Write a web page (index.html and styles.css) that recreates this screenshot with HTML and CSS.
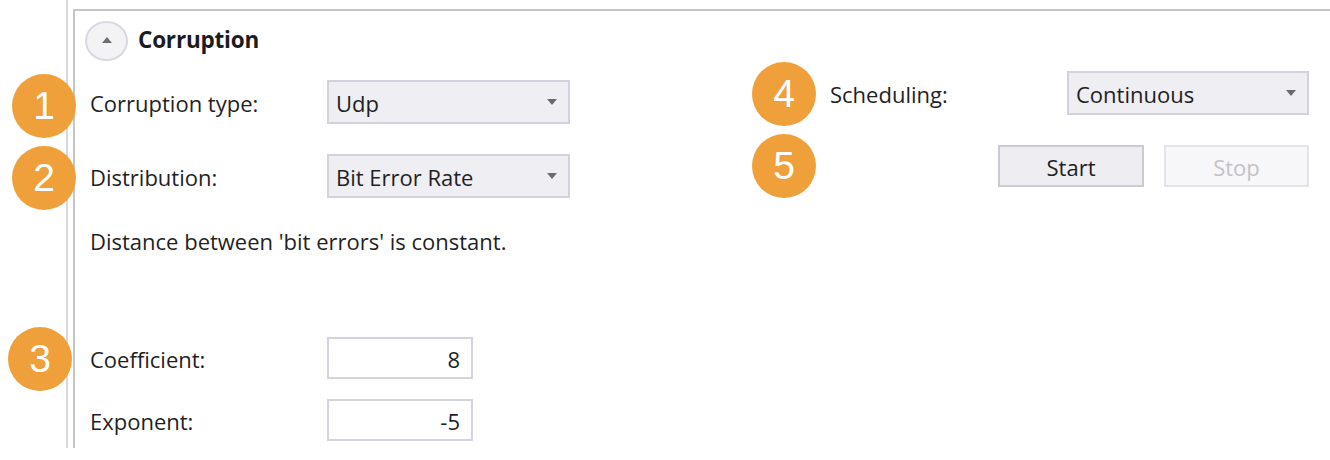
FILE: index.html
```html
<!DOCTYPE html>
<html lang="en">
<head>
<meta charset="utf-8">
<title>Corruption</title>
<link rel="stylesheet" href="styles.css">
</head>
<body>
<div class="page">
  <div class="frame">
    <section class="panel">
      <header class="panel-head">
        <button class="collapse" type="button" aria-label="Collapse">
          <svg width="10" height="6" viewBox="0 0 10 6"><path d="M0 6 L5 0 L10 6 Z" fill="#6e6e6e"/></svg>
        </button>
        <h2 class="panel-title">Corruption</h2>
      </header>
      <div class="panel-body">
        <div class="col col-left">
          <div class="field">
            <span class="label">Corruption type:</span>
            <div class="select"><span>Udp</span><span class="caret"></span></div>
          </div>
          <div class="field field-gap">
            <span class="label">Distribution:</span>
            <div class="select"><span>Bit Error Rate</span><span class="caret"></span></div>
          </div>
          <p class="desc">Distance between 'bit errors' is constant.</p>
          <div class="field field-num field-coef">
            <span class="label">Coefficient:</span>
            <div class="input">8</div>
          </div>
          <div class="field field-num field-exp">
            <span class="label">Exponent:</span>
            <div class="input">-5</div>
          </div>
        </div>
        <div class="col col-right">
          <div class="field field-sched">
            <span class="label">Scheduling:</span>
            <div class="select select-sched"><span>Continuous</span><span class="caret"></span></div>
          </div>
          <div class="buttons">
            <button class="btn" type="button">Start</button>
            <button class="btn btn-disabled" type="button" disabled>Stop</button>
          </div>
        </div>
      </div>
    </section>
  </div>
  <span class="badge badge-1">1</span>
  <span class="badge badge-2">2</span>
  <span class="badge badge-3">3</span>
  <span class="badge badge-4">4</span>
  <span class="badge badge-5">5</span>
</div>
</body>
</html>
```

FILE: styles.css
```css
* { box-sizing: border-box; }
html, body { margin: 0; padding: 0; background: #ffffff; }
body {
  font-family: "Open Sans", "Noto Sans", "DejaVu Sans", sans-serif;
  color: #1f1f24;
  width: 1330px;
  height: 460px;
  overflow: hidden;
}
.page { position: relative; width: 1330px; height: 460px; }
.frame {
  margin-left: 66px;
  border-left: 2px solid #d6d6e4;
  padding-left: 5px;
  height: 448px;
  padding-top: 9px;
}
.panel {
  border-left: 2px solid #c6c6c9;
  border-top: 2px solid #c6c6c9;
  height: 439px;
}
.panel-head {
  display: flex;
  align-items: center;
  padding: 10px 0 0 10px;
  height: 50px;
}
.collapse {
  width: 43px;
  height: 40px;
  border-radius: 50%;
  border: 2px solid #d8d8e0;
  background: #f3f3f6;
  display: flex;
  align-items: center;
  justify-content: center;
  padding: 0 0 3px 0;
  margin: 0;
}
.panel-title {
  margin: 0 0 3px 10px;
  font-size: 22.5px;
  line-height: 28px;
  font-weight: 700;
  color: #1b1b22;
  letter-spacing: -0.2px;
}
.panel-body { display: flex; }
.col-left { width: 495px; padding-left: 15px; padding-top: 19px; }
.col-right { width: 479px; margin-left: 260px; padding-top: 10px; }
.field { display: flex; align-items: center; height: 44px; }
.field-gap { margin-top: 30px; }
.label { flex: 1; font-size: 22px; line-height: 28px; padding-top: 2px; }
.select {
  width: 243px;
  height: 44px;
  display: flex;
  align-items: center;
  justify-content: space-between;
  background: #eeeef3;
  border: 2px solid #d2d2de;
  padding: 2px 11px 0 7px;
  font-size: 22px;
}
.select-sched { width: 242px; }
.caret {
  width: 0;
  height: 0;
  border-left: 5px solid transparent;
  border-right: 5px solid transparent;
  border-top: 6px solid #6a6a6e;
  margin-top: -3px;
}
.desc {
  margin: 28px 0 0 0;
  font-size: 22px;
  line-height: 30px;
}
.field-num { height: 42px; }
.field-coef { margin-top: 81px; }
.field-exp { margin-top: 20px; }
.input {
  width: 146px;
  height: 42px;
  margin-right: 97px;
  background: #ffffff;
  border: 2px solid #d4d4e0;
  display: flex;
  align-items: center;
  justify-content: flex-end;
  padding: 2px 11px 0 0;
  font-size: 22px;
}
.buttons {
  display: flex;
  justify-content: flex-end;
  gap: 20px;
  margin-top: 30px;
}
.btn {
  width: 146px;
  height: 42px;
  margin: 0;
  padding: 2px 0 0 0;
  font-family: inherit;
  font-size: 22px;
  color: #1f1f24;
  background: #eeeef2;
  border: 2px solid #cbcbd3;
}
.btn-disabled {
  width: 145px;
  color: #c3c3c6;
  background: #f7f7f9;
  border-color: #e3e3e8;
}
.badge {
  position: absolute;
  width: 64px;
  height: 64px;
  border-radius: 50%;
  background: #f0a03b;
  color: #ffffff;
  font-family: "Liberation Sans", Arial, sans-serif;
  font-size: 39px;
  line-height: 64px;
  text-align: center;
}
.badge-1 { left: 12px; top: 74px; }
.badge-2 { left: 12px; top: 146px; }
.badge-3 { left: 8px; top: 327px; }
.badge-4 { left: 752px; top: 62px; }
.badge-5 { left: 752px; top: 134px; }
```
